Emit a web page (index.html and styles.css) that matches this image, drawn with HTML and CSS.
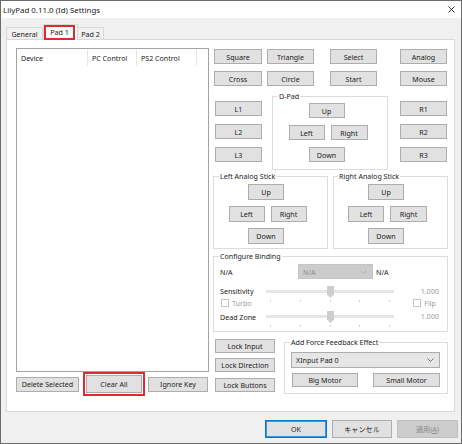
FILE: index.html
```html
<!DOCTYPE html>
<html>
<head>
<meta charset="utf-8">
<title>LilyPad Settings</title>
<link rel="stylesheet" href="styles.css">
</head>
<body>
<div class="window">
  <div class="titlebar">
    <span class="title">LilyPad 0.11.0 (Id) Settings</span>
    <svg class="close" viewBox="0 0 7 7" width="7" height="7"><path d="M0.5 0.5 L6.5 6.5 M6.5 0.5 L0.5 6.5" stroke="#222" stroke-width="0.9" fill="none"/></svg>
  </div>
  <div class="tabs">
    <div class="tab tab-general">General</div>
    <div class="tab tab-active"><span class="mark">Pad 1</span></div>
    <div class="tab tab-pad2">Pad 2</div>
  </div>
  <div class="panel">
    <div class="left">
      <div class="list">
        <div class="list-head">
          <div class="col c1">Device</div>
          <div class="col c2">PC Control</div>
          <div class="col c3">PS2 Control</div>
        </div>
      </div>
      <div class="left-buttons">
        <div class="btn b-del">Delete Selected</div>
        <div class="red-box"><div class="btn b-fill">Clear All</div></div>
        <div class="btn b-ignore">Ignore Key</div>
      </div>
    </div>
    <div class="right">
      <div class="row row1">
        <div class="btn w48 ml1">Square</div>
        <div class="btn w47 ml5">Triangle</div>
        <div class="btn w47 ml16">Select</div>
        <div class="btn w47 ml23">Analog</div>
      </div>
      <div class="row row2">
        <div class="btn w48 ml1">Cross</div>
        <div class="btn w47 ml5">Circle</div>
        <div class="btn w47 ml16">Start</div>
        <div class="btn w47 ml23">Mouse</div>
      </div>
      <div class="middle">
        <div class="shoulders sh-left">
          <div class="btn">L1</div>
          <div class="btn">L2</div>
          <div class="btn">L3</div>
        </div>
        <div class="group dpad">
          <span class="glabel">D-Pad</span>
          <div class="btn w36 up">Up</div>
          <div class="pair">
            <div class="btn w36">Left</div>
            <div class="btn w37">Right</div>
          </div>
          <div class="btn w36 down">Down</div>
        </div>
        <div class="shoulders sh-right">
          <div class="btn">R1</div>
          <div class="btn">R2</div>
          <div class="btn">R3</div>
        </div>
      </div>
      <div class="sticks">
        <div class="group stick">
          <span class="glabel">Left Analog Stick</span>
          <div class="btn w36 up">Up</div>
          <div class="pair">
            <div class="btn w36">Left</div>
            <div class="btn w36">Right</div>
          </div>
          <div class="btn w36 down">Down</div>
        </div>
        <div class="group stick">
          <span class="glabel gl5">Right Analog Stick</span>
          <div class="btn w36 up">Up</div>
          <div class="pair">
            <div class="btn w36">Left</div>
            <div class="btn w37">Right</div>
          </div>
          <div class="btn w36 down">Down</div>
        </div>
      </div>
      <div class="group binding">
        <span class="glabel">Configure Binding</span>
        <div class="bind-row">
          <span class="bind-label">N/A</span>
          <div class="combo combo-disabled"><span>N/A</span><svg class="chev" viewBox="0 0 7 4" width="7" height="4"><path d="M0.5 0.5 L3.5 3.5 L6.5 0.5" stroke="#a8a8a8" stroke-width="0.8" fill="none"/></svg></div>
          <span class="bind-after">N/A</span>
        </div>
        <div class="bind-grid">
          <span class="g-label g-sens">Sensitivity</span>
          <div class="slider s-sens">
            <div class="track"></div>
            <svg class="thumb" viewBox="0 0 7 12" width="7" height="12"><path d="M0 0 H7 V8.5 L3.5 12 L0 8.5 Z" fill="#cdcdcd"/></svg>
            <div class="ticks"><i></i><i></i><i></i><i></i><i></i></div>
          </div>
          <span class="g-value v-sens">1.000</span>
          <label class="check c-turbo"><span class="box"></span>Turbo</label>
          <label class="check c-flip"><span class="box"></span>Flip</label>
          <span class="g-label g-dead">Dead Zone</span>
          <div class="slider s-dead">
            <div class="track"></div>
            <svg class="thumb" viewBox="0 0 7 12" width="7" height="12"><path d="M0 0 H7 V8.5 L3.5 12 L0 8.5 Z" fill="#cdcdcd"/></svg>
            <div class="ticks"><i></i><i></i><i></i><i></i><i></i></div>
          </div>
          <span class="g-value v-dead">1.000</span>
        </div>
      </div>
      <div class="bottom">
        <div class="locks">
          <div class="btn">Lock Input</div>
          <div class="btn lk2">Lock Direction</div>
          <div class="btn lk3">Lock Buttons</div>
        </div>
        <div class="group ff">
          <span class="glabel">Add Force Feedback Effect</span>
          <div class="combo combo-ff"><span>XInput Pad 0</span><svg class="chev" viewBox="0 0 7 4" width="7" height="4"><path d="M0.5 0.5 L3.5 3.5 L6.5 0.5" stroke="#555" stroke-width="0.8" fill="none"/></svg></div>
          <div class="motors">
            <div class="btn m-big">Big Motor</div>
            <div class="btn m-small">Small Motor</div>
          </div>
        </div>
      </div>
    </div>
  </div>
  <div class="footer">
    <div class="btn fb fb-ok">OK</div>
    <div class="btn fb fb-cancel">キャンセル</div>
    <div class="btn fb fb-apply">適用(<u>A</u>)</div>
  </div>
</div>
</body>
</html>
```
FILE: styles.css
```css
* { box-sizing: border-box; }
html, body { margin: 0; padding: 0; }
body {
  width: 462px;
  height: 444px;
  overflow: hidden;
  font-family: "Noto Sans", "Liberation Sans", "Noto Sans CJK JP", sans-serif;
  font-size: 7.1px;
  color: #222;
  background: #f0f0f0;
}
.window {
  width: 462px;
  height: 444px;
  border: 1px solid #6b6b6b;
  background: #f0f0f0;
  display: flex;
  flex-direction: column;
}
.titlebar {
  height: 17px;
  flex: none;
  background: #fff;
  display: flex;
  align-items: center;
  justify-content: space-between;
  padding: 0 6px 0 2px;
}
.title { font-size: 7.9px; color: #1a1a1a; }
.close { display: block; }

/* tabs */
.tabs {
  height: 21px;
  flex: none;
  display: flex;
  align-items: flex-end;
  padding-left: 5px;
}
.tab {
  height: 12px;
  border: 1px solid #d9d9d9;
  border-bottom: none;
  background: #f0f0f0;
  display: flex;
  align-items: center;
  justify-content: center;
}
.tab-general { width: 37px; }
.tab-active {
  width: 35px;
  height: 16px;
  margin-bottom: -1px;
  background: #fff;
  border-color: #d9d9d9;
  position: relative;
  z-index: 2;
  justify-content: flex-start;
  align-items: flex-start;
}
.mark {
  width: 31px;
  height: 15px;
  border: 2px solid #df2a30;
  display: flex;
  align-items: center;
  justify-content: center;
  padding-bottom: 1px;
}
.tab-pad2 { width: 26px; border-left: none; }

/* panel */
.panel {
  flex: none;
  margin-left: 5px;
  width: 449px;
  height: 373px;
  border: 1px solid #d9d9d9;
  background: #fff;
  display: flex;
  position: relative;
  z-index: 1;
}
.left {
  margin-left: 9px;
  padding-top: 8px;
  width: 193px;
  display: flex;
  flex-direction: column;
}
.list {
  height: 324px;
  border: 1px solid #a3a3a3;
  background: #fff;
}
.list-head {
  height: 18px;
  display: flex;
  align-items: center;
}
.col {
  height: 16px;
  display: flex;
  align-items: center;
  border-right: 1px solid #e6e6e6;
  padding-left: 4px;
}
.c1 { width: 71px; }
.c2 { width: 49px; }
.c3 { width: 60px; }
.left-buttons {
  height: 24px;
  display: flex;
  align-items: center;
}
.btn {
  height: 15px;
  background: #e1e1e1;
  border: 1px solid #adadad;
  display: flex;
  align-items: center;
  justify-content: center;
  white-space: nowrap;
  color: #222;
  flex: none;
}
.b-del { width: 63px; height: 15px; }
.red-box {
  width: 62px;
  height: 24px;
  margin-left: 4px;
  border: 2px solid #df2a30;
  padding: 1px;
}
.b-fill { width: 100%; height: 100%; }
.b-ignore { width: 60px; margin-left: 3px; }

/* right column */
.right {
  margin-left: 4px;
  width: 235px;
  display: flex;
  flex-direction: column;
}
.row { display: flex; height: 15px; }
.row1 { margin-top: 9px; }
.row2 { margin-top: 7px; }
.w36 { width: 36px; }
.w37 { width: 37px; }
.w47 { width: 47px; }
.w48 { width: 48px; }
.ml1 { margin-left: 1px; }
.ml5 { margin-left: 5px; }
.ml16 { margin-left: 16px; }
.ml23 { margin-left: 23px; }

.middle { display: flex; }
.shoulders {
  width: 47px;
  padding-top: 15px;
  display: flex;
  flex-direction: column;
  gap: 8px;
}
.shoulders .btn { width: 47px; }
.sh-left { margin-left: 2px; }
.sh-right { margin-left: 12px; }

.group {
  position: relative;
  border: 1px solid #dcdcdc;
}
.glabel {
  position: absolute;
  top: -6px;
  left: 5px;
  background: #fff;
  padding: 0 1px;
  line-height: 10px;
  white-space: nowrap;
}
.gl5 { left: 4px; }

.dpad {
  margin-left: 10px;
  margin-top: 10px;
  width: 116px;
  height: 74px;
  padding: 6px 4px 0 0;
  display: flex;
  flex-direction: column;
  align-items: center;
}
.pair { display: flex; gap: 6px; margin-top: 7px; }
.dpad .up { margin-right: 3px; }
.dpad .down { margin-top: 7px; margin-right: 3px; }

.sticks {
  display: flex;
  gap: 5px;
  margin-top: 6px;
}
.stick {
  width: 115px;
  height: 73px;
  padding: 7px 6px 0 0;
  display: flex;
  flex-direction: column;
  align-items: center;
}
.stick .btn { height: 16px; }
.stick .up { margin-right: 3px; }
.stick .pair { margin-top: 6px; }
.stick .down { margin-top: 6px; margin-right: 3px; }

/* binding */
.binding {
  margin-top: 7px;
  height: 76px;
  padding: 0 8px 0 6px;
}
.bind-row {
  margin-top: 7px;
  height: 15px;
  display: flex;
  align-items: center;
}
.bind-label { width: 78px; }
.combo {
  height: 15px;
  display: flex;
  align-items: center;
  justify-content: space-between;
  padding: 0 5px 0 4px;
}
.combo-disabled {
  width: 75px;
  background: #cccccc;
  border: 1px solid #c4c4c4;
  color: #8c8c8c;
}
.bind-after { margin-left: 3px; }
.bind-grid {
  margin-top: 5px;
  display: grid;
  grid-template-columns: 46px 128px 1fr;
  grid-template-rows: 13px 12px 14px 7px;
}
.g-label { display: flex; align-items: center; }
.g-sens { grid-column: 1; grid-row: 1; }
.g-dead { grid-column: 1; grid-row: 3; padding-top: 2px; }
.g-value {
  color: #9a9a9a;
  display: flex;
  align-items: center;
  justify-content: flex-end;
}
.v-sens { grid-column: 3; grid-row: 1; }
.v-dead { grid-column: 3; grid-row: 3; }
.slider { position: relative; }
.s-sens { grid-column: 2; grid-row: 1 / 3; }
.s-dead { grid-column: 2; grid-row: 3 / 5; }
.track {
  margin-top: 6px;
  height: 3px;
  background: #e6e6e6;
}
.thumb {
  position: absolute;
  left: 61px;
  top: 2px;
  display: block;
}
.ticks {
  position: absolute;
  top: 16px;
  left: 4px;
  right: 4px;
  display: flex;
  justify-content: space-between;
}
.ticks i {
  display: block;
  width: 1px;
  height: 2px;
  background: #cfcfcf;
}
.check {
  display: flex;
  align-items: center;
  color: #9a9a9a;
}
.box {
  width: 8px;
  height: 8px;
  border: 1px solid #c6c6c6;
  background: #fff;
  margin-right: 3px;
}
.c-turbo { grid-column: 1; grid-row: 2; margin-left: 1px; }
.c-flip { grid-column: 3; grid-row: 2; justify-self: end; margin-right: 3px; }

/* bottom */
.bottom {
  display: flex;
  margin-top: 7px;
}
.locks {
  margin-left: 2px;
  width: 60px;
  display: flex;
  flex-direction: column;
}
.locks .btn { width: 60px; height: 14px; }
.lk2 { margin-top: 5px; }
.lk3 { margin-top: 6px; }
.ff {
  margin-left: 9px;
  margin-top: 3px;
  width: 164px;
  height: 52px;
  padding: 0 7px 0 6px;
}
.combo-ff {
  margin-top: 9px;
  height: 16px;
  width: 149px;
  background: #e6e6e6;
  border: 1px solid #adadad;
}
.motors {
  display: flex;
  justify-content: space-between;
  margin-top: 5px;
}
.m-big { width: 66px; height: 14px; margin-left: 1px; }
.m-small { width: 67px; height: 14px; }

/* footer */
.footer {
  flex: none;
  margin-top: 8px;
  padding-right: 3px;
  display: flex;
  justify-content: flex-end;
  gap: 5px;
}
.fb { height: 18px; }
.fb-ok {
  width: 62px;
  border: 1px solid #0078d7;
  box-shadow: inset 0 0 0 1px #3c93e0;
}
.fb-cancel { width: 60px; }
.fb-apply {
  width: 61px;
  background: #cccccc;
  border-color: #bfbfbf;
  color: #8a8a8a;
}
.fb-apply u { text-decoration: underline; }
```
